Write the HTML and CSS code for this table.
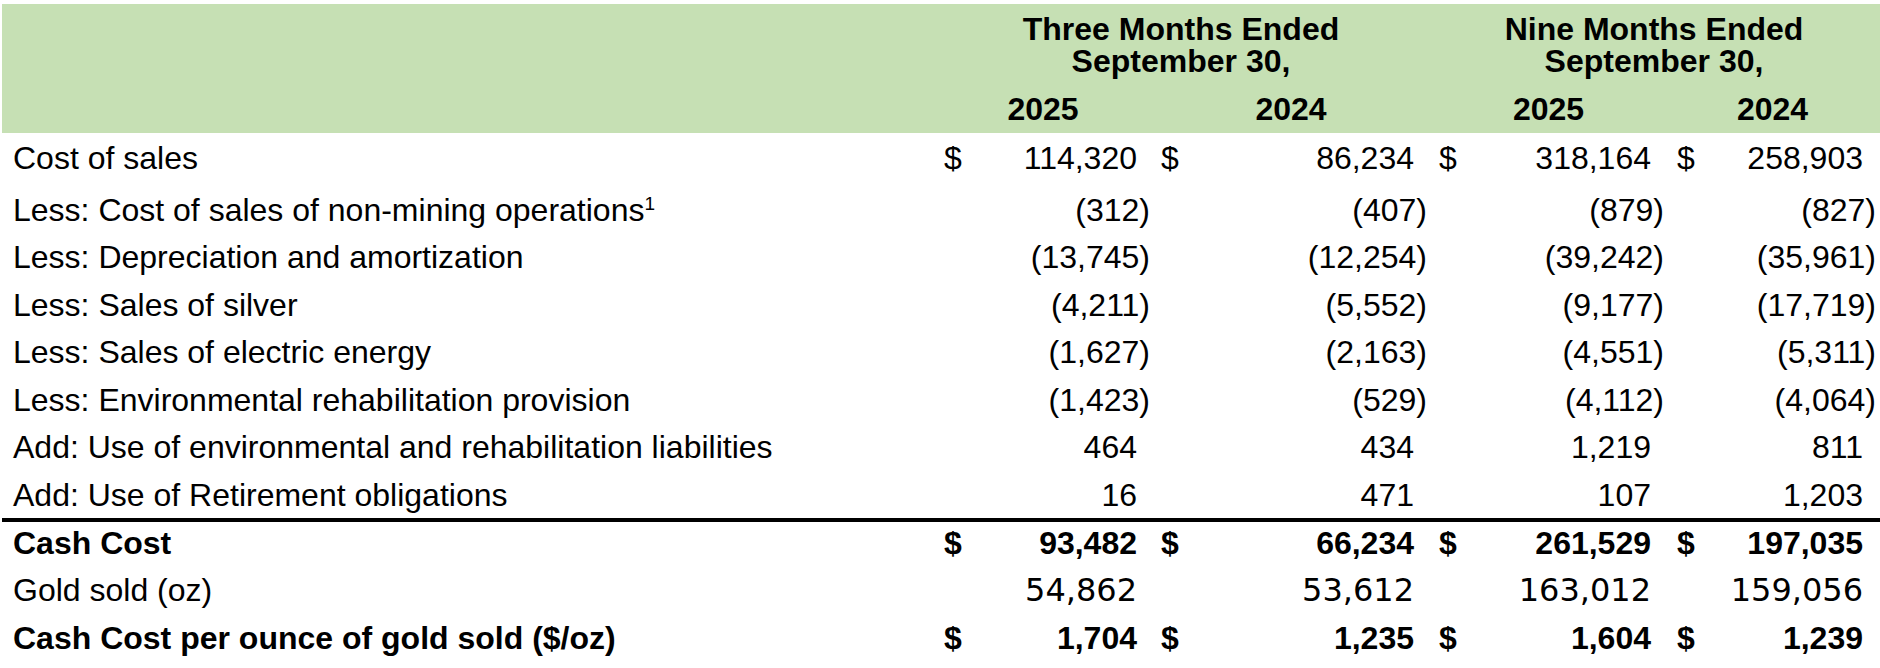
FILE: index.html
```html
<!DOCTYPE html>
<html>
<head>
<meta charset="utf-8">
<link rel="stylesheet" href="styles.css">
</head>
<body>
<div class="sheet">
  <div class="head">
    <div class="grid titles">
      <div class="period q">Three Months Ended<br>September 30,</div>
      <div class="period n">Nine Months Ended<br>September 30,</div>
    </div>
    <div class="grid years">
      <div class="yr y1">2025</div>
      <div class="yr y2">2024</div>
      <div class="yr y3">2025</div>
      <div class="yr y4">2024</div>
    </div>
  </div>

  <div class="grid row">
    <div class="label">Cost of sales</div>
    <div class="cur">$</div><div class="num c1">114,320<i class="sp"></i></div>
    <div class="cur">$</div><div class="num c2">86,234<i class="sp"></i></div>
    <div class="cur">$</div><div class="num c3">318,164<i class="sp"></i></div>
    <div class="cur">$</div><div class="num c4">258,903<i class="sp"></i></div>
  </div>

  <div class="grid row tall">
    <div class="label">Less: Cost of sales of non-mining operations<sup class="fn">1</sup></div>
    <div class="cur"></div><div class="num c1">(312)</div>
    <div class="cur"></div><div class="num c2">(407)</div>
    <div class="cur"></div><div class="num c3">(879)</div>
    <div class="cur"></div><div class="num c4">(827)</div>
  </div>

  <div class="grid row">
    <div class="label">Less: Depreciation and amortization</div>
    <div class="cur"></div><div class="num c1">(13,745)</div>
    <div class="cur"></div><div class="num c2">(12,254)</div>
    <div class="cur"></div><div class="num c3">(39,242)</div>
    <div class="cur"></div><div class="num c4">(35,961)</div>
  </div>

  <div class="grid row">
    <div class="label">Less: Sales of silver</div>
    <div class="cur"></div><div class="num c1">(4,211)</div>
    <div class="cur"></div><div class="num c2">(5,552)</div>
    <div class="cur"></div><div class="num c3">(9,177)</div>
    <div class="cur"></div><div class="num c4">(17,719)</div>
  </div>

  <div class="grid row">
    <div class="label">Less: Sales of electric energy</div>
    <div class="cur"></div><div class="num c1">(1,627)</div>
    <div class="cur"></div><div class="num c2">(2,163)</div>
    <div class="cur"></div><div class="num c3">(4,551)</div>
    <div class="cur"></div><div class="num c4">(5,311)</div>
  </div>

  <div class="grid row">
    <div class="label">Less: Environmental rehabilitation provision</div>
    <div class="cur"></div><div class="num c1">(1,423)</div>
    <div class="cur"></div><div class="num c2">(529)</div>
    <div class="cur"></div><div class="num c3">(4,112)</div>
    <div class="cur"></div><div class="num c4">(4,064)</div>
  </div>

  <div class="grid row">
    <div class="label">Add: Use of environmental and rehabilitation liabilities</div>
    <div class="cur"></div><div class="num c1">464<i class="sp"></i></div>
    <div class="cur"></div><div class="num c2">434<i class="sp"></i></div>
    <div class="cur"></div><div class="num c3">1,219<i class="sp"></i></div>
    <div class="cur"></div><div class="num c4">811<i class="sp"></i></div>
  </div>

  <div class="grid row">
    <div class="label">Add: Use of Retirement obligations</div>
    <div class="cur"></div><div class="num c1">16<i class="sp"></i></div>
    <div class="cur"></div><div class="num c2">471<i class="sp"></i></div>
    <div class="cur"></div><div class="num c3">107<i class="sp"></i></div>
    <div class="cur"></div><div class="num c4">1,203<i class="sp"></i></div>
  </div>

  <div class="grid row total bold">
    <div class="label">Cash Cost</div>
    <div class="cur">$</div><div class="num c1">93,482<i class="sp"></i></div>
    <div class="cur">$</div><div class="num c2">66,234<i class="sp"></i></div>
    <div class="cur">$</div><div class="num c3">261,529<i class="sp"></i></div>
    <div class="cur">$</div><div class="num c4">197,035<i class="sp"></i></div>
  </div>

  <div class="grid row after">
    <div class="label">Gold sold (oz)</div>
    <div class="cur"></div><div class="num c1 alt">54,862<i class="sp"></i></div>
    <div class="cur"></div><div class="num c2 alt">53,612<i class="sp"></i></div>
    <div class="cur"></div><div class="num c3 alt">163,012<i class="sp"></i></div>
    <div class="cur"></div><div class="num c4 alt">159,056<i class="sp"></i></div>
  </div>

  <div class="grid row after bold">
    <div class="label">Cash Cost per ounce of gold sold ($/oz)</div>
    <div class="cur">$</div><div class="num c1">1,704<i class="sp"></i></div>
    <div class="cur">$</div><div class="num c2">1,235<i class="sp"></i></div>
    <div class="cur">$</div><div class="num c3">1,604<i class="sp"></i></div>
    <div class="cur">$</div><div class="num c4">1,239<i class="sp"></i></div>
  </div>
</div>
</body>
</html>
```

FILE: styles.css
```css
html, body {
  margin: 0;
  padding: 0;
  background: #ffffff;
}

body {
  font-family: "Liberation Sans", Arial, sans-serif;
  font-size: 32px;
  color: #000000;
}

.sheet {
  width: 1878px;
  padding: 4px 0 0 2px;
}

.grid {
  display: grid;
  grid-template-columns: 942px 40px 177px 40px 238px 40px 198px 40px 163px;
}

.head {
  background: #c6e0b4;
  height: 129px;
  box-sizing: border-box;
  padding-top: 9px;
  font-weight: bold;
  line-height: 32px;
}

.period {
  text-align: center;
}

.period.q {
  grid-column: 2 / 6;
  padding-right: 21px;
}

.period.n {
  grid-column: 6 / 10;
  padding-right: 11px;
}

.years {
  margin-top: 16px;
}

.yr {
  text-align: center;
}

.y1 { grid-column: 2 / 4; padding-right: 19px; }
.y2 { grid-column: 4 / 6; padding-right: 18px; }
.y3 { grid-column: 6 / 8; padding-right: 19px; }
.y4 { grid-column: 8 / 10; padding-right: 12px; }

.row {
  height: 47.5px;
  box-sizing: border-box;
  padding-top: 7.5px;
  line-height: 35px;
  align-items: baseline;
  white-space: nowrap;
}

.row.tall {
  height: 52px;
  padding-top: 12px;
}

.row.total {
  border-top: 4px solid #000000;
  padding-top: 4px;
}

.row.after {
  padding-top: 8px;
}

.bold {
  font-weight: bold;
}

.label {
  padding-left: 11px;
}

.fn {
  font-size: 19px;
  line-height: 0;
  vertical-align: 11px;
}

.cur {
  text-align: left;
}

.num {
  text-align: right;
}

.c1 { padding-right: 11px; }
.c2 { padding-right: 12px; }
.c3 { padding-right: 13px; }
.c4 { padding-right: 4px; }

.sp {
  display: inline-block;
  width: 13px;
}

.alt {
  font-family: "DejaVu Sans", Verdana, sans-serif;
}
```
